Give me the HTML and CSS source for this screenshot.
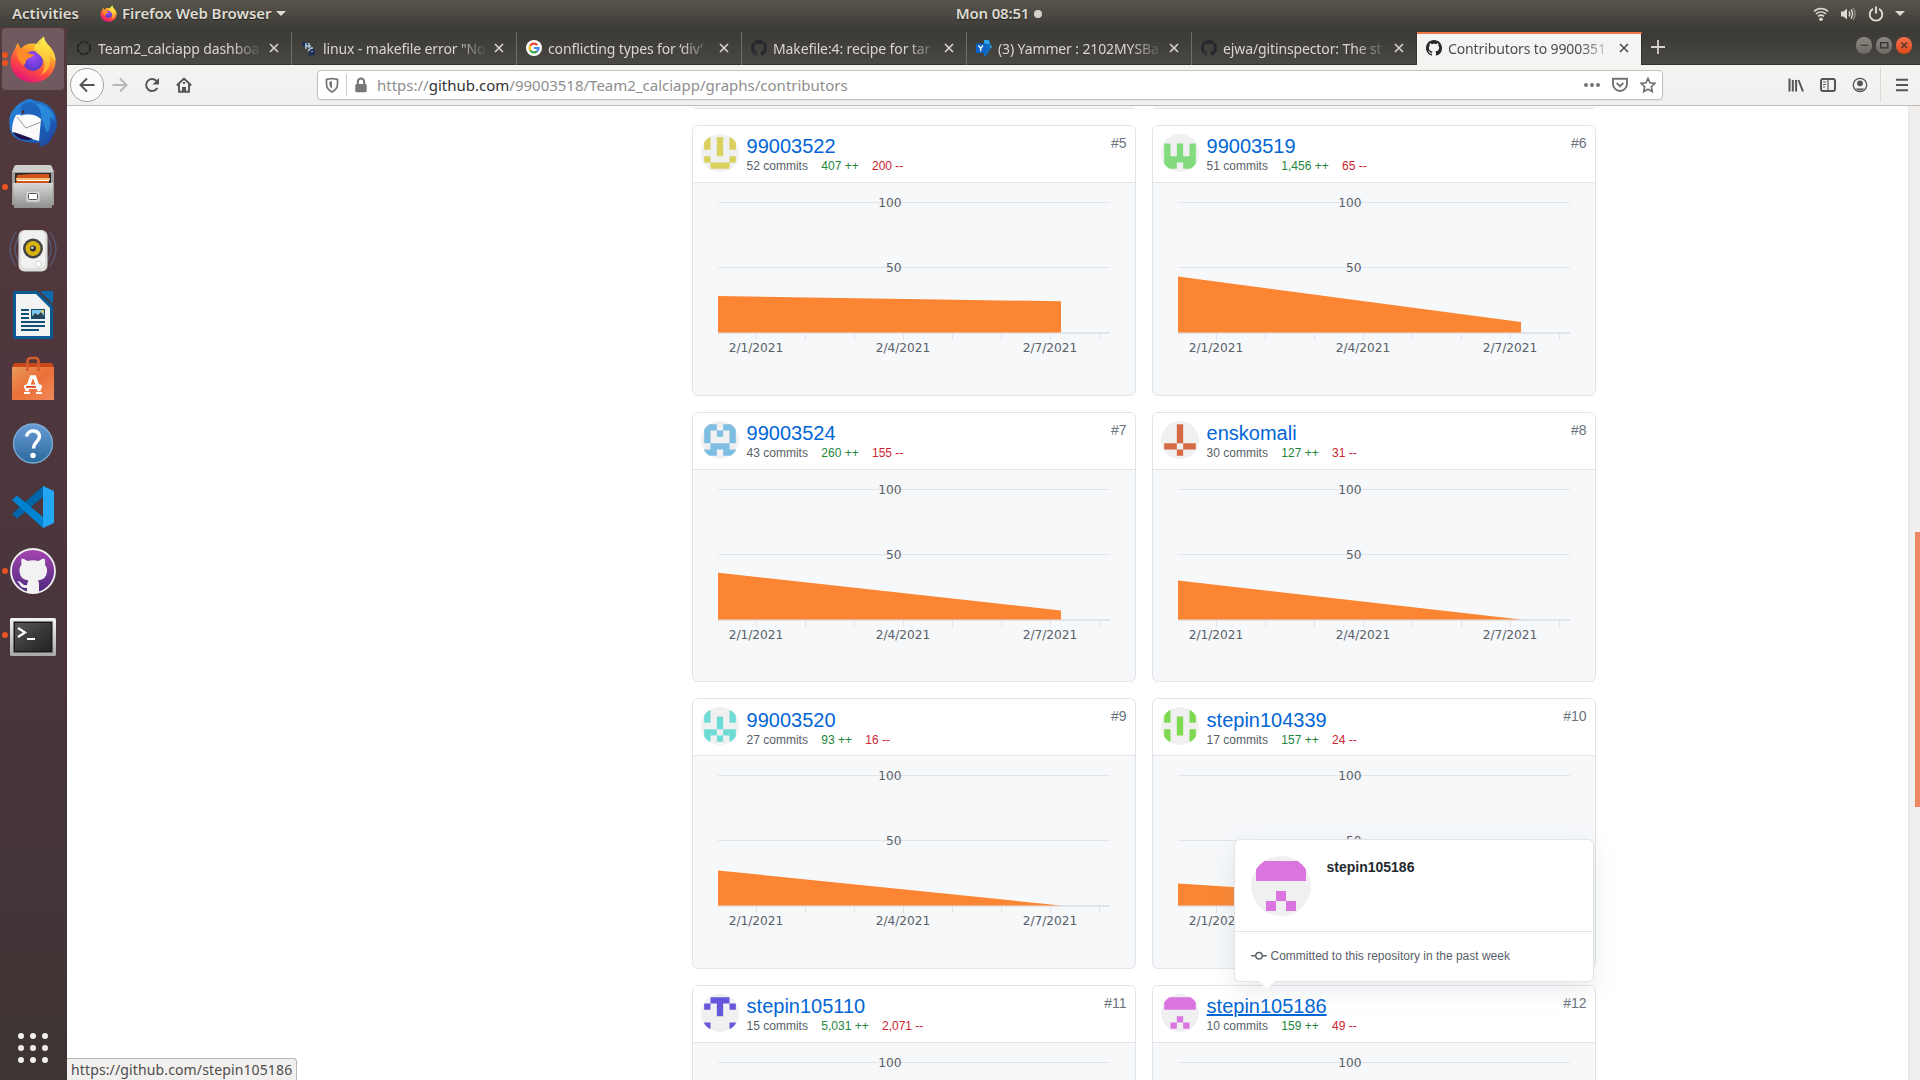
FILE: index.html
```html
<!DOCTYPE html>
<html lang="en">
<head>
<meta charset="utf-8">
<title>Contributors to 99003518/Team2_calciapp</title>
<link rel="stylesheet" href="styles.css">
</head>
<body>
<svg class="defs" width="0" height="0" aria-hidden="true">
  <defs>
    <linearGradient id="ffOuter" x1=".8" y1="0" x2=".3" y2="1"><stop offset="0" stop-color="#fff44f"/><stop offset=".35" stop-color="#ffa62b"/><stop offset=".68" stop-color="#ff4a3f"/><stop offset="1" stop-color="#e0127f"/></linearGradient>
    <radialGradient id="ffGlobe" cx=".5" cy=".3" r=".8"><stop offset="0" stop-color="#a14bf5"/><stop offset=".5" stop-color="#7540e0"/><stop offset="1" stop-color="#4a37b8"/></radialGradient>
    <linearGradient id="ffFlame" x1=".5" y1="0" x2=".5" y2="1"><stop offset="0" stop-color="#fff64f"/><stop offset="1" stop-color="#ffb02e"/></linearGradient>
    <linearGradient id="tbBlue" x1="0" y1="0" x2="1" y2="1"><stop offset="0" stop-color="#2a8ade"/><stop offset=".6" stop-color="#1e63bd"/><stop offset="1" stop-color="#1c3f98"/></linearGradient>
    <linearGradient id="metal" x1="0" y1="0" x2="0" y2="1"><stop offset="0" stop-color="#d8d8d6"/><stop offset="1" stop-color="#8f8f8d"/></linearGradient>
    <linearGradient id="bag" x1="0" y1="0" x2="1" y2="1"><stop offset="0" stop-color="#e99a5b"/><stop offset=".5" stop-color="#ec7038"/><stop offset="1" stop-color="#f08a5a"/></linearGradient>
    <linearGradient id="help" x1="0" y1="0" x2="0" y2="1"><stop offset="0" stop-color="#6a9bd8"/><stop offset="1" stop-color="#2b6a9c"/></linearGradient>
    <linearGradient id="ghd" x1="0" y1="0" x2="0" y2="1"><stop offset="0" stop-color="#a544b0"/><stop offset="1" stop-color="#4c2a80"/></linearGradient>
    <linearGradient id="term" x1="0" y1="0" x2="1" y2="1"><stop offset="0" stop-color="#5a5a5a"/><stop offset=".5" stop-color="#3a3a3a"/><stop offset="1" stop-color="#222"/></linearGradient>
    <linearGradient id="frame" x1="0" y1="0" x2="0" y2="1"><stop offset="0" stop-color="#f2f2f2"/><stop offset="1" stop-color="#a8a8a8"/></linearGradient>
  </defs>
  <symbol id="firefox" viewBox="0 0 48 48">
    <path fill="url(#ffOuter)" d="M6 14c1-3 2-5 3-6 1 3 2 4.500 3 5.500 3-3.500 7-5 11-5 3 0 6 .5 8 2C31.500 6 33.500 3 35 1.500c0 4 3 7 6.500 11C45 17 46.500 21 46.500 26c0 12-10 21.500-22.500 21.500S1.500 38 1.500 27c0-5 2-9 4.500-13z"/>
    <circle cx="24" cy="26" r="10" fill="url(#ffGlobe)"/>
    <path fill="url(#ffFlame)" d="M35 1.500c0 4 3 7 6.500 11C45 17 46.500 21 46.500 26c-3-3-4-4-6-5 2 8-1 16-9 19 6-7 5-14 0-19-5-4-8-7-5-11 2-3 5-6 8.500-8.500z" opacity=".85"/>
    <path fill="#ff8a2a" d="M8 17c4-2 8-2 11 1 2 1 4 1.500 6 1.500-1 3-5 3-7 5-1.500 1.500-1 4-3.500 6C10 27 8 22 8 17z"/>
  </symbol>
  <symbol id="mark" viewBox="0 0 16 16">
    <path fill="currentColor" fill-rule="evenodd" d="M8 0C3.580 0 0 3.580 0 8c0 3.540 2.290 6.530 5.470 7.590.4.070.55-.17.55-.38 0-.19-.01-.82-.01-1.490-2.010.37-2.530-.49-2.690-.94-.09-.23-.48-.94-.82-1.130-.28-.15-.68-.52-.01-.53.63-.01 1.080.58 1.230.82.72 1.210 1.870.87 2.330.66.07-.52.28-.87.51-1.070-1.780-.2-3.640-.89-3.640-3.950 0-.87.31-1.590.82-2.150-.08-.2-.36-1.020.08-2.120 0 0 .67-.21 2.200.82.64-.18 1.320-.27 2-.27s1.360.09 2 .27c1.530-1.040 2.200-.82 2.200-.82.44 1.100.16 1.920.08 2.120.51.56.82 1.270.82 2.150 0 3.070-1.870 3.750-3.650 3.950.29.25.54.73.54 1.480 0 1.070-.01 1.930-.01 2.200 0 .21.15.46.55.38A8.013 8.013 0 0 0 16 8c0-4.420-3.580-8-8-8z"/>
  </symbol>
  <symbol id="close" viewBox="0 0 10 10"><path d="M1 1l8 8M9 1l-8 8" stroke="currentColor" stroke-width="1.600" fill="none"/></symbol>
</svg>

<header class="topbar">
  <span class="activities">Activities</span>
  <span class="app-menu"><svg width="17" height="17"><use href="#firefox"/></svg><span class="app-name">Firefox Web Browser</span><i class="caret"></i></span>
  <span class="clock">Mon 08:51<i class="notify"></i></span>
  <span class="tray">
    <svg width="16" height="16" viewBox="0 0 16 16" fill="none" stroke="#dfdbd2" stroke-width="1.500"><path d="M1 5.500c4-4 10-4 14 0M3 8c3-2.800 7-2.800 10 0M5 10.400c2-1.700 4-1.700 6 0"/><circle cx="8" cy="13.300" r="1.800" fill="#dfdbd2" stroke="none"/></svg>
    <svg width="16" height="16" viewBox="0 0 16 16" fill="none" stroke="#dfdbd2" stroke-width="1.400"><path d="M1 5.500h2.500l3.500-3v11l-3.500-3H1z" fill="#dfdbd2" stroke="none"/><path d="M9 5.500c1 1.500 1 3.500 0 5M11 3.500c2 2.800 2 6.200 0 9"/><path d="M13 2c2.800 3.500 2.800 8.500 0 12" stroke="#8b8880"/></svg>
    <svg width="16" height="16" viewBox="0 0 16 16" fill="none" stroke="#dfdbd2" stroke-width="1.900"><path d="M5 2.800a6.300 6.300 0 1 0 6 0M8 .5v7"/></svg>
    <i class="caret"></i>
  </span>
</header>

<div class="desktop">
  <nav class="dock">
    <div class="launcher active two"><svg width="48" height="48"><use href="#firefox"/></svg></div>
    <div class="launcher"><svg width="48" height="48" viewBox="0 0 48 48">
      <path fill="url(#tbBlue)" d="M5 10C9 4 15 2 19 0c4-1 5 1 8 2 12 1 21 10 21 22 0 5-2 10-5 14-1 5-6 9-14 10 2-2 3-3 3-4C18 44 3 42 1 30-1 20 1 14 5 10z"/>
      <path fill="#2f9be8" d="M30 5c9 2 15 8 16 18-2-3-3-4-5-5 1 6 0 12-3 16l-6-16c-6-2-10-6-11-11z" opacity=".65"/>
      <path fill="#fafafa" d="M7 16c7-1 20-2 25 4l-2 22C19 39 10 36 3 33c0-7 1-12 4-17z"/>
      <path d="M8 18l9 11 15-6" fill="none" stroke="#999" stroke-width="1"/>
      <path fill="#1e63bd" d="M12 8c3-5 10-6 15-2 4 3 6 8 5 14-6-6-14-6-21-3 3-3 1-5 1-9z"/><circle cx="14" cy="13" r="1.500" fill="#5b2a18"/>
      <path fill="#24124f" d="M4 33c7 2 13 4 20 7-9 3-17-1-20-7z"/></svg></div>
    <div class="launcher one"><svg width="48" height="48" viewBox="0 0 48 48">
      <path fill="#cfcfcd" d="M5 4q.5-2 2-2h34q1.500 0 2 2l2 5v33H3V9z"/><path fill="#9d9d9b" d="M3 9h42v33H3z"/><path fill="#2b2b2b" d="M6 10h36v10H6z"/>
      <path fill="#d3541d" d="M8 12l14-1h18v9H7z"/><path fill="#f7c37c" d="M7 15h34v2H7z"/><path fill="#fff" d="M8 17h32v1H8z"/>
      <path fill="url(#metal)" d="M4 20h40l-1 25H5z"/><rect x="17" y="28" width="14" height="11" rx="2" fill="#d9d9d7" stroke="#b5b5b3"/><rect x="19.500" y="30.500" width="9" height="6" rx="1" fill="#fff" stroke="#555"/></svg></div>
    <div class="launcher"><svg width="48" height="48" viewBox="0 0 48 48">
      <g fill="none" stroke="#5e6f9c" stroke-width="1.300" opacity=".6"><path d="M7 5q-12 17 0 34M11 8q-10 14 0 28M41 5q12 17 0 34M37 8q10 14 0 28"/></g>
      <rect x="9.500" y="3" width="29" height="41.500" rx="6" fill="#dededc"/><rect x="12" y="4" width="24" height="37" rx="5" fill="#f1f1ef"/>
      <circle cx="24" cy="21.500" r="10" fill="#444"/><circle cx="24" cy="21.500" r="7.500" fill="#d9b310"/><circle cx="24" cy="21.500" r="3" fill="#333"/><circle cx="23.300" cy="20.700" r="1.300" fill="#ddd"/><circle cx="29.500" cy="37" r="3" fill="#fff" stroke="#d0d0ce"/></svg></div>
    <div class="launcher"><svg width="48" height="48" viewBox="0 0 48 48">
      <path fill="#0a5a94" d="M6 0h22l16 15v31q0 2-2 2H6q-2 0-2-2V2q0-2 2-2z"/><path fill="#f3f3f3" d="M7 3h20l14 14v28H7z"/><path fill="#0a6cab" d="M31 0h13v13z"/>
      <g fill="#0f5177"><path d="M12 18h8v2h-8zM12 22h8v2h-8zM12 26h8v2h-8zM12 30h24v2H12zM12 34h24v2H12zM12 38h18v2H12z"/><path d="M22 18h14v10H22z"/></g><path fill="#7cc6ea" d="M23 19h12v6H23z"/><path fill="#2b4350" d="M23 26l3-4 3 2 3-3 3 4v2H23z"/><circle cx="33.500" cy="20.500" r="1.500" fill="#e9c342"/></svg></div>
    <div class="launcher"><svg width="48" height="48" viewBox="0 0 48 48">
      <path fill="#c8481a" d="M5 8h38l2 5H3z"/><path fill="url(#bag)" d="M3 12h42v33H3z"/><path d="M18.500 16V7q0-4 3-4h5q3 0 3 4v9" fill="none" stroke="#d35f2c" stroke-width="2.600"/>
      <path d="M17.500 36l5-14h3l5 14" fill="none" stroke="#fff" stroke-width="3.600"/><path d="M15 38h6M27 38h6" stroke="#fff" stroke-width="2"/><rect x="15" y="29.500" width="18" height="4.500" rx="2" fill="#fff"/><rect x="17" y="31" width="10" height="1.800" fill="#dc4a1c"/></svg></div>
    <div class="launcher"><svg width="48" height="48" viewBox="0 0 48 48">
      <circle cx="24" cy="24.500" r="19.500" fill="url(#help)" stroke="#7badd6" stroke-width="1.300"/><path d="M17.500 17.500c.5-4 4-6 7.500-5.500 5 .5 7 5 4 9-2 2.700-4.500 4-4.500 8.500" fill="none" stroke="#fff" stroke-width="3.400"/><circle cx="24" cy="36.500" r="2.700" fill="#fff"/></svg></div>
    <div class="launcher"><svg width="48" height="48" viewBox="0 0 48 48">
      <path fill="#0065a9" d="M3 31l5 4.500L34 14V3z"/><path fill="#0084d1" d="M3 17l5-4.500L34 34v11z"/><path fill="#24a7f2" d="M34 3l11 5v32l-11 5z"/></svg></div>
    <div class="launcher one"><svg width="48" height="48" viewBox="0 0 48 48">
      <circle cx="24" cy="24" r="22" fill="url(#ghd)" stroke="#f0f0f0" stroke-width="1.800"/>
      <path fill="#f2f2f2" d="M12.500 11.500q3 0 6 2.500 5.500-1.500 11 0 3-2.500 6-2.500 1 3 .5 6 2.500 3 2 7-.5 8-9 9 1 2 1 4v8.300q-6 1.400-12 0V41q-5 .5-7-3-1.500-2.800-3-4 3-.5 5 2.500 2 2.500 5 1.500.3-3 1.500-4.500-8.500-1-9-9-.5-4 2-7-.5-3 0-6z"/></svg></div>
    <div class="launcher one"><svg width="48" height="48" viewBox="0 0 48 48">
      <rect x="1" y="7" width="46" height="38" rx="1.500" fill="url(#frame)"/><rect x="4.500" y="10.500" width="39" height="31" fill="#1a1a1a"/><rect x="6" y="12" width="36" height="28" fill="url(#term)"/><path d="M9 17l7 4.500-7 4.500M18 28h8" fill="none" stroke="#fff" stroke-width="2.200"/></svg></div>
    <div class="app-grid"><i></i><i></i><i></i><i></i><i></i><i></i><i></i><i></i><i></i></div>
  </nav>

  <main class="browser">
    <div class="tabstrip">
      <div class="tab"><svg class="fav" viewBox="0 0 16 16"><circle cx="8" cy="8" r="6.300" fill="none" stroke="#262626" stroke-width="2.200" stroke-dasharray="3.700 1.250"/></svg><span class="label">Team2_calciapp dashboa</span><svg class="x"><use href="#close"/></svg></div>
      <div class="tab"><svg class="fav" viewBox="0 0 16 16"><path fill="#1d3158" d="M1 1l5 2-1 4-3-1zM9 9l5 1v5l-7 1z"/><path d="M5 3v6M8 3v5M4 6h6M7 11l3-3M11 7v2M11 11v1" stroke="#a9c3df" stroke-width="1.500" fill="none"/></svg><span class="label">linux - makefile error "No</span><svg class="x"><use href="#close"/></svg></div>
      <div class="tab"><svg class="fav" viewBox="0 0 16 16"><circle cx="8" cy="8" r="8" fill="#fff"/><g fill="none" stroke-width="2.200"><path stroke="#ea4335" d="M4.200 5.800A4.400 4.400 0 0 1 11.300 5"/><path stroke="#fbbc05" d="M4.200 5.800a4.400 4.400 0 0 0 0 4.400"/><path stroke="#34a853" d="M4.200 10.200a4.400 4.400 0 0 0 6.700 1.200"/><path stroke="#4285f4" d="M8 8h4.500a4.400 4.400 0 0 1-1.600 3.400"/></g></svg><span class="label">conflicting types for ‘div’</span><svg class="x"><use href="#close"/></svg></div>
      <div class="tab"><svg class="fav mark"><use href="#mark"/></svg><span class="label">Makefile:4: recipe for tar</span><svg class="x"><use href="#close"/></svg></div>
      <div class="tab"><svg class="fav" viewBox="0 0 16 16"><path fill="#28a8ea" d="M8 0h5l1 4 2 3-4 4-4 5z"/><path fill="#0f6cbd" d="M8 4h6v6l-4 6H8z"/><rect y="3.500" width="9.500" height="9.500" fill="#0a63c9"/><path d="M2.500 5.500l2.200 3v2.800M7 5.500l-2.300 3" stroke="#fff" stroke-width="1.300" fill="none"/></svg><span class="label">(3) Yammer : 2102MYSBa</span><svg class="x"><use href="#close"/></svg></div>
      <div class="tab"><svg class="fav mark"><use href="#mark"/></svg><span class="label">ejwa/gitinspector: The st</span><svg class="x"><use href="#close"/></svg></div>
      <div class="tab current"><svg class="fav mark"><use href="#mark"/></svg><span class="label">Contributors to 9900351</span><svg class="x"><use href="#close"/></svg></div>
      <svg class="newtab" width="14" height="14" viewBox="0 0 14 14"><path d="M7 0v14M0 7h14" stroke="#d5d2cb" stroke-width="1.800"/></svg>
      <div class="window-buttons">
        <svg class="wb" viewBox="0 0 16 16"><path d="M4.500 8h7"/></svg>
        <svg class="wb" viewBox="0 0 16 16"><path d="M4.500 5.500h7v5h-7z"/></svg>
        <svg class="wb wb-close" viewBox="0 0 16 16"><path d="M5.200 5.200l5.600 5.600M10.800 5.200l-5.600 5.600"/></svg>
      </div>
    </div>

    <div class="toolbar">
      <div class="back"><svg width="16" height="16" viewBox="0 0 16 16"><path d="M15.500 8H1.500M8 1.500L1.500 8 8 14.500"/></svg></div>
      <svg class="tool dim" viewBox="0 0 16 16"><path d="M.5 8h14M8 1.500L14.500 8 8 14.500"/></svg>
      <svg class="tool" viewBox="0 0 16 16"><path d="M13.300 11A6 6 0 1 1 13 4.500"/><path d="M15 1v6.500H8.500z" fill="#555" stroke="none"/></svg>
      <svg class="tool" viewBox="0 0 16 16"><path d="M.8 8.500L8 1.500l7.200 7M3 7.500v7.300h10V7.500" stroke-width="1.900"/><path d="M6 15v-5h4v5z" fill="#555" stroke="none"/><path d="M7 6h2" /></svg>
      <div class="urlbar">
        <svg class="u shield" viewBox="0 0 16 16"><path d="M8 1.500l5.500 1V7c0 4-2.500 6.500-5.500 8-3-1.500-5.500-4-5.500-8V2.500z" stroke-width="1.700"/><path d="M8 4.200v7.500c-1.800-1.300-2.600-2.800-2.600-4.700V4.700z" fill="#737373" stroke="none" /></svg>
        <i class="usep"></i>
        <svg class="u lock" viewBox="0 0 16 16"><rect x="2.300" y="7" width="11.400" height="8.200" rx="1.500" fill="#777" stroke="none"/><path d="M4.800 8V4.800a3.200 3.200 0 0 1 6.400 0V8"/></svg>
        <span class="url">https://<b>github.com</b>/99003518/Team2_calciapp/graphs/contributors</span>
        <svg class="u" viewBox="0 0 16 16"><g fill="#737373" stroke="none"><circle cx="2" cy="8" r="2"/><circle cx="8" cy="8" r="2"/><circle cx="14" cy="8" r="2"/></g></svg>
        <svg class="u" viewBox="0 0 16 16"><path d="M1 1.800h14V7A7 7 0 0 1 1 7zM4.700 6L8 9.200 11.300 6" stroke-width="1.900"/></svg>
        <svg class="u" viewBox="0 0 16 16"><path d="M8 1.300l2 4.500 5 .5-3.700 3.400 1 4.900L8 12.200l-4.300 2.400 1-4.900L1 6.300l5-.5z" stroke-width="1.700"/></svg>
      </div>
      <div class="tools-right">
        <svg class="tool" viewBox="0 0 16 16"><path d="M1.500 1.500v13M4.800 3v11.500M8.100 3v11.500M10.500 3l4.500 11.500"/></svg>
        <svg class="tool" viewBox="0 0 16 16"><rect x="1" y="2" width="14" height="12" rx="2"/><path d="M8 2v12M3 5h3M3 7.500h3M3 10h2" stroke-width="1.200"/></svg>
        <svg class="tool" viewBox="0 0 16 16"><circle cx="8" cy="8" r="6.700" stroke-width="1.300"/><circle cx="8" cy="6.300" r="2.900" fill="#555" stroke="none"/><path d="M3.500 11.500h9a6 6 0 0 1-9 0z" fill="#555" stroke="none"/></svg>
        <i class="tsep"></i>
        <svg class="tool" viewBox="0 0 16 16"><path d="M2 2.700h12M2 8h12M2 13.300h12"/></svg>
      </div>
    </div>

    <div class="viewport">
      <div class="page" id="contributors">
        <div class="card-tail"></div>
        <div class="card-tail"></div>
      </div>
      <div class="scrollbar"><i class="thumb"></i></div>
      <div class="link-status">https://github.com/stepin105186</div>
    </div>
  </main>
</div>
<script src="app.js"></script>
</body>
</html>
```
FILE: styles.css
```css
* { box-sizing: border-box; }
body {
  margin: 0;
  width: 1920px;
  height: 1080px;
  overflow: hidden;
  display: flex;
  flex-direction: column;
  background: #fff;
  font-family: "Liberation Sans", Arial, sans-serif;
}
svg { display: block; flex: none; }
.defs { position: absolute; }

/* GNOME top bar */
.topbar {
  height: 27px;
  flex: none;
  display: grid;
  grid-template-columns: 1fr auto 1fr;
  align-items: center;
  padding: 0 16px 0 12px;
  background: linear-gradient(#59554c, #3e3d38);
  color: #dfdbd2;
  font: 600 15px/27px "Noto Sans", sans-serif;
  text-shadow: 0 1px 1px rgba(0, 0, 0, .5);
}
.activities { grid-column: 1; grid-row: 1; }
.app-menu { grid-column: 1; grid-row: 1; margin-left: 88px; display: flex; align-items: center; gap: 5px; }
.app-name { letter-spacing: -.05px; }
.caret { border: 5px solid transparent; border-top-color: #dfdbd2; border-bottom: 0; width: 0; }
.clock { grid-column: 2; display: flex; align-items: center; gap: 5px; transform: translateX(41px); letter-spacing: -.2px; }
.notify { width: 8px; height: 8px; border-radius: 50%; background: #d6d3cb; }
.tray { grid-column: 3; justify-self: end; display: flex; align-items: center; gap: 11.500px; transform: translateX(1px); }

.desktop { flex: 1; min-height: 0; display: flex; }

/* Launcher */
.dock {
  width: 67px;
  flex: none;
  display: flex;
  flex-direction: column;
  background: linear-gradient(#53393d, #4b353c 55%, #3e3434);
}
.launcher {
  width: 62px;
  height: 62px;
  margin: 1px 2px;
  display: flex;
  align-items: center;
  justify-content: center;
  border-radius: 4px;
  position: relative;
}
.launcher.active { background: #705a5f; }
.one::before, .two::before, .two::after {
  content: "";
  position: absolute;
  left: 0;
  top: 28px;
  width: 6px;
  height: 6px;
  border-radius: 50%;
  background: #e95420;
}
.two::before { top: 24px; }
.two::after { top: 32px; }
.app-grid {
  margin: auto 0 17px 18px;
  display: grid;
  grid-template-columns: repeat(3, 6px);
  gap: 6px;
}
.app-grid i { height: 6px; border-radius: 50%; background: #f0efee; }

/* Browser chrome */
.browser { flex: 1; min-width: 0; display: flex; flex-direction: column; }
.tabstrip {
  height: 38px;
  flex: none;
  padding-top: 5px;
  display: flex;
  align-items: center;
  background: linear-gradient(#3c3b37, #3c3b37 8px, #4a4843);
  border-bottom: 1px solid #33322e;
  font: 14px/33px "Noto Sans", sans-serif;
  color: #d9d6ce;
}
.tab {
  width: 225px;
  height: 33px;
  flex: none;
  display: flex;
  align-items: center;
  padding: 0 12px 0 9px;
  border-right: 1px solid #6f6d67;
}
.tab:nth-child(6) { border-right-color: #33322e; }
.tab.current { background: #f5f4f2; color: #4c4c4c; border-top: 2px solid #f07746; border-right-color: #33322e; line-height: 31px; padding-bottom: 2px; }
.fav { width: 16px; height: 16px; margin-right: 6px; }
.mark { color: #24292e; }
.label {
  flex: 1;
  overflow: hidden;
  white-space: nowrap;
  letter-spacing: -.12px;
  -webkit-mask-image: linear-gradient(90deg, #000 calc(100% - 32px), transparent 100%);
  mask-image: linear-gradient(90deg, #000 calc(100% - 32px), transparent 100%);
}
.x { width: 10px; height: 10px; margin-left: 6px; }
.newtab { margin-left: 9px; margin-bottom: 2px; }
.window-buttons { margin-left: auto; margin-right: 8px; display: flex; gap: 3.500px; padding-bottom: 5px; }
.wb { width: 16.500px; height: 16.500px; border-radius: 50%; background: linear-gradient(#8b8982, #6b6962); stroke: #33322e; fill: none; stroke-width: 1.200; }
.wb-close { background: linear-gradient(#f2714a, #df4a1b); }

.toolbar {
  height: 41px;
  flex: none;
  display: flex;
  align-items: center;
  padding-left: 3px;
  background: linear-gradient(#f5f4f2, #f1f0ee);
  border-bottom: 1px solid #c2bfbb;
  fill: none;
  stroke: #555;
  stroke-width: 2;
}
.back {
  width: 34px;
  height: 34px;
  border: 1px solid #a5a3a0;
  border-radius: 50%;
  background: #fcfcfc;
  display: grid;
  place-items: center;
  margin-right: 8px;
}
.tool { width: 16px; height: 16px; margin-right: 16px; }
.dim { stroke: #b9b8b6; }
.urlbar {
  width: 1346px;
  height: 30px;
  margin-left: 109px;
  padding: 0 6px;
  display: flex;
  align-items: center;
  border: 1px solid #c4c0bc;
  border-radius: 4px;
  background: #fff;
  box-shadow: 0 1px 2px rgba(0, 0, 0, .06);
  stroke: #737373;
}
.u { width: 16px; height: 16px; margin-right: 12px; }
.u:last-child { margin-right: 0; }
.shield { margin-right: 6px; }
.lock { margin-right: 8px; }
.usep { width: 1px; height: 22px; background: #c9c9c9; margin-right: 6px; }
.url { flex: 1; font: 15px/28px "Noto Sans", sans-serif; color: #8e8e8e; }
.url b { font-weight: 400; color: #333; }
.tools-right { margin-left: auto; display: flex; align-items: center; }
.tools-right .tool:last-child { margin-right: 10.500px; }
.tsep { width: 1px; height: 34px; background: #dad8d5; margin: 0 13px 0 -4px; }

/* Page */
.viewport { flex: 1; min-height: 0; position: relative; display: flex; justify-content: space-between; overflow: hidden; }
.page {
  margin-left: 625px;
  display: grid;
  grid-template-columns: 444px 444px;
  grid-template-rows: 3px;
  grid-auto-rows: 270.670px;
  gap: 16px;
  align-content: start;
}
.card-tail { background: #f6f8fa; border-bottom: 1px solid #e1e4e8; border-radius: 0 0 6px 6px; margin: 0 1px; }
.card { border: 1px solid #e1e4e8; border-radius: 6px; background: #f6f8fa; position: relative; }
.card-head {
  height: 57px;
  padding: 8px;
  display: flex;
  background: #fff;
  border-bottom: 1px solid #e1e4e8;
  border-radius: 5px 5px 0 0;
}
.avatar { border-radius: 50%; background: #f0f0f0; }
.who { flex: 1; margin-left: 7.600px; padding-top: .25px; }
.name { display: block; width: max-content; font-size: 20px; line-height: 24px; color: #0366d6; text-decoration: none; }
.name.hover { text-decoration: underline; }
.stats { display: flex; gap: 13.330px; font-size: 12px; line-height: 17px; color: #586069; }
.add { color: #22863a; }
.del { color: #cb2431; }
.rank { font-size: 14px; line-height: 18px; color: #6a737d; margin-right: .5px; }
.chart { font: 12.200px "DejaVu Sans", sans-serif; }
.chart text { fill: #586069; }
.rule { stroke: #e1e4e8; stroke-width: 1; }
.base { stroke: #e1e4e8; stroke-width: 2; }
.area { fill: #fb8532; }

/* Profile hovercard */
.hovercard {
  position: absolute;
  z-index: 2;
  left: 81px;
  top: -147px;
  width: 360px;
  height: 143px;
  border: 1px solid #e1e4e8;
  border-radius: 6px;
  background: #fff;
  box-shadow: 0 8px 24px rgba(149, 157, 165, .2);
}
.hovercard::after {
  content: "";
  position: absolute;
  left: 24px;
  bottom: -8px;
  border: 8px solid transparent;
  border-top-color: #fff;
  border-bottom: 0;
}
.profile { height: 92px; padding: 16px; display: flex; gap: 15.500px; border-bottom: 1px solid #e1e4e8; }
.profile strong { font-size: 14px; line-height: 23px; color: #24292e; }
.note { height: 49px; padding: 0 16px; display: flex; align-items: center; gap: 3.500px; font-size: 12px; color: #586069; }
.note svg { fill: #586069; }

.scrollbar { width: 12px; background: #f0efed; padding-top: 426px; border-left: 1px solid #e6e4e2; }
.thumb { display: block; width: 5px; height: 275px; margin-left: 6px; background: #f08763; }
.link-status {
  position: absolute;
  left: 0;
  bottom: 0;
  height: 22px;
  padding: 0 4px;
  border: 1px solid #bab6b2;
  border-width: 1px 1px 0 0;
  border-radius: 0 4px 0 0;
  background: #f3f1ef;
  color: #4c4c4c;
  font: 14px/22px "Noto Sans", sans-serif;
  letter-spacing: .13px;
}
```
FILE: app.js
```js
const people = [
  { rank: 5, name: "99003522", commits: 52, add: "407", del: "200", from: 28, to: 24, color: "#d9d05e", rows: ["10101", "10101", "00100", "10001", "01110"] },
  { rank: 6, name: "99003519", commits: 51, add: "1,456", del: "65", from: 43, to: 8, color: "#82db7e", rows: ["00000", "10101", "10101", "11111", "11011"] },
  { rank: 7, name: "99003524", commits: 43, add: "260", del: "155", from: 36, to: 7, color: "#7ebee2", rows: ["11011", "10101", "10001", "01110", "11011"] },
  { rank: 8, name: "enskomali", commits: 30, add: "127", del: "31", from: 30, to: 0, color: "#d66946", rows: ["00100", "00100", "00100", "11011", "00100"] },
  { rank: 9, name: "99003520", commits: 27, add: "93", del: "16", from: 27, to: 0, color: "#6edcd4", rows: ["10001", "10101", "00100", "11011", "10101"] },
  { rank: 10, name: "stepin104339", commits: 17, add: "157", del: "24", from: 17, to: 0, color: "#7fd950", rows: ["10001", "10101", "00100", "10101", "10001"] },
  { rank: 11, name: "stepin105110", commits: 15, add: "5,031", del: "2,071", from: 14, to: 1, color: "#6557da", rows: ["01110", "10101", "00100", "00000", "10001"] },
  { rank: 12, name: "stepin105186", commits: 10, add: "159", del: "49", from: 10, to: 0, color: "#da74de", rows: ["11111", "11111", "00000", "00100", "01010"], hover: true }
];

// 5x5 identicon on a 420-unit canvas: 35 units of padding, 70 units per cell
function avatar(p, size) {
  let d = "";
  p.rows.forEach((row, y) => [...row].forEach((on, x) => {
    if (on === "1") d += `M${35 + x * 70} ${35 + y * 70}h70v70h-70z`;
  }));
  return `<svg class="avatar" width="${size}" height="${size}" viewBox="0 0 420 420"><path fill="${p.color}" d="${d}"/></svg>`;
}

function chart(p) {
  const y = v => 149.5 - v * 1.3;
  let ticks = "";
  for (let i = 0; i < 8; i++) ticks += `M${63.5 + i * 49} 151v6`;
  return `<svg class="chart" width="442" height="210" viewBox="0 0 442 210">
    <path class="rule" d="M25 19.5h392M25 84.5h392${ticks}"/><path class="base" d="M25 150h392"/>
    <path class="area" d="M25 ${y(p.from)}L368 ${y(p.to)}V149.500H25z"/>
    <text x="208.500" y="24" text-anchor="end">100</text><text x="208.500" y="89" text-anchor="end">50</text>
    <g text-anchor="middle"><text x="63" y="169">2/1/2021</text><text x="210" y="169">2/4/2021</text><text x="357" y="169">2/7/2021</text></g>
  </svg>`;
}

function hovercard(p) {
  return `<div class="hovercard">
    <div class="profile">${avatar(p, 60)}<strong>${p.name}</strong></div>
    <div class="note"><svg width="16" height="16" viewBox="0 0 16 16"><path fill-rule="evenodd" d="M10.500 7.750a2.500 2.500 0 1 1-5 0 2.500 2.500 0 0 1 5 0zm1.430.75a4.002 4.002 0 0 1-7.860 0H.750a.75.75 0 1 1 0-1.500h3.320a4.001 4.001 0 0 1 7.860 0h3.320a.75.75 0 1 1 0 1.500h-3.320z"/></svg><span>Committed to this repository in the past week</span></div>
  </div>`;
}

document.getElementById("contributors").insertAdjacentHTML("beforeend", people.map(p => `
  <section class="card">
    <div class="card-head">${avatar(p, 38)}
      <div class="who"><a class="name${p.hover ? " hover" : ""}">${p.name}</a>
        <div class="stats"><span>${p.commits} commits</span><span class="add">${p.add} ++</span><span class="del">${p.del} --</span></div></div>
      <span class="rank">#${p.rank}</span>
    </div>
    ${chart(p)}
    ${p.hover ? hovercard(p) : ""}
  </section>`).join(""));
```
